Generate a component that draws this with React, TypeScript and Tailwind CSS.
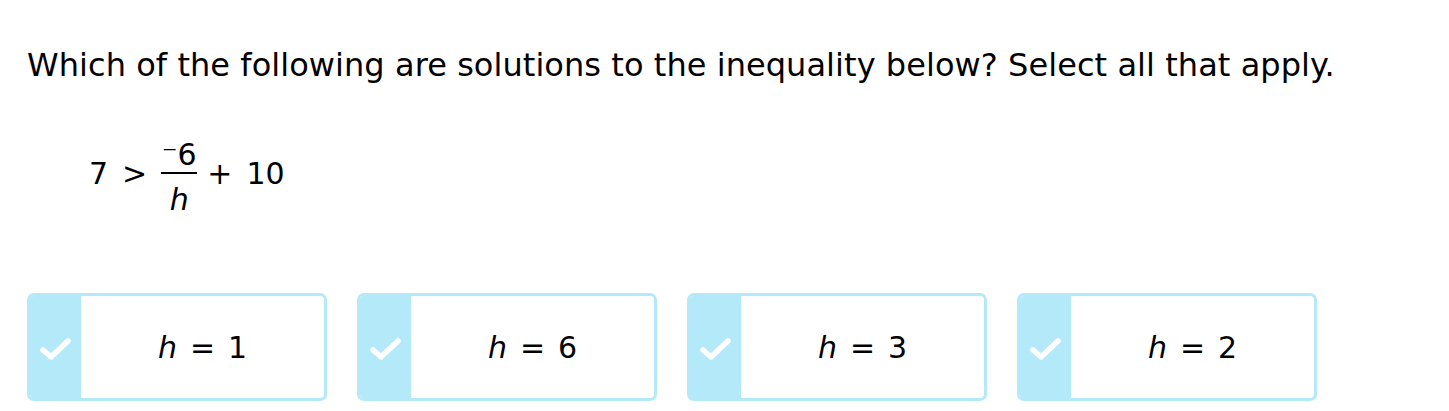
import React from "react";

const Check = () => (
  <svg width="32" height="24" viewBox="0 0 32 24" fill="none">
    <path d="M3 13 L11 20 L28 4" stroke="white" strokeWidth="5.5" strokeLinecap="round" strokeLinejoin="round" />
  </svg>
);

const Card = ({ v }: { v: string }) => (
  <div className="flex h-[108px] w-[300px] overflow-hidden rounded-[7px] border-[3px] border-[#b3e9f8] bg-white">
    <div className="flex w-[51px] items-center justify-center bg-[#b3e9f8] pt-[3px]">
      <Check />
    </div>
    <div className="flex flex-1 items-center justify-center text-[30px] text-black">
      <span className="italic">h</span>
      <span className="ml-[13px]">=</span>
      <span className="ml-[13px]">{v}</span>
    </div>
  </div>
);

export default function App() {
  return (
    <div className="h-[411px] w-[1449px] bg-white pl-[27px] pt-[42px] text-black" style={{ fontFamily: '"DejaVu Sans", Verdana, sans-serif' }}>
      <p className="text-[32px] leading-[46px] tracking-[0.06px]">Which of the following are solutions to the inequality below? Select all that apply.</p>
      <div className="mt-[41px] flex items-center pl-[62px] text-[30px]">
        <span>7</span>
        <span className="ml-[14px]">&gt;</span>
        <div className="ml-[14px] flex flex-col items-center">
          <div className="flex h-[42px] items-end">
            <span className="leading-[32px]">⁻6</span>
          </div>
          <div className="my-[1px] h-[2px] w-[36px] bg-black" />
          <div className="flex h-[42px] items-start pt-[9px]">
            <span className="italic leading-[32px]">h</span>
          </div>
        </div>
        <span className="ml-[10px]">+</span>
        <span className="ml-[14px]">10</span>
      </div>
      <div className="mt-[76px] flex gap-[30px]">
        <Card v="1" />
        <Card v="6" />
        <Card v="3" />
        <Card v="2" />
      </div>
    </div>
  );
}
